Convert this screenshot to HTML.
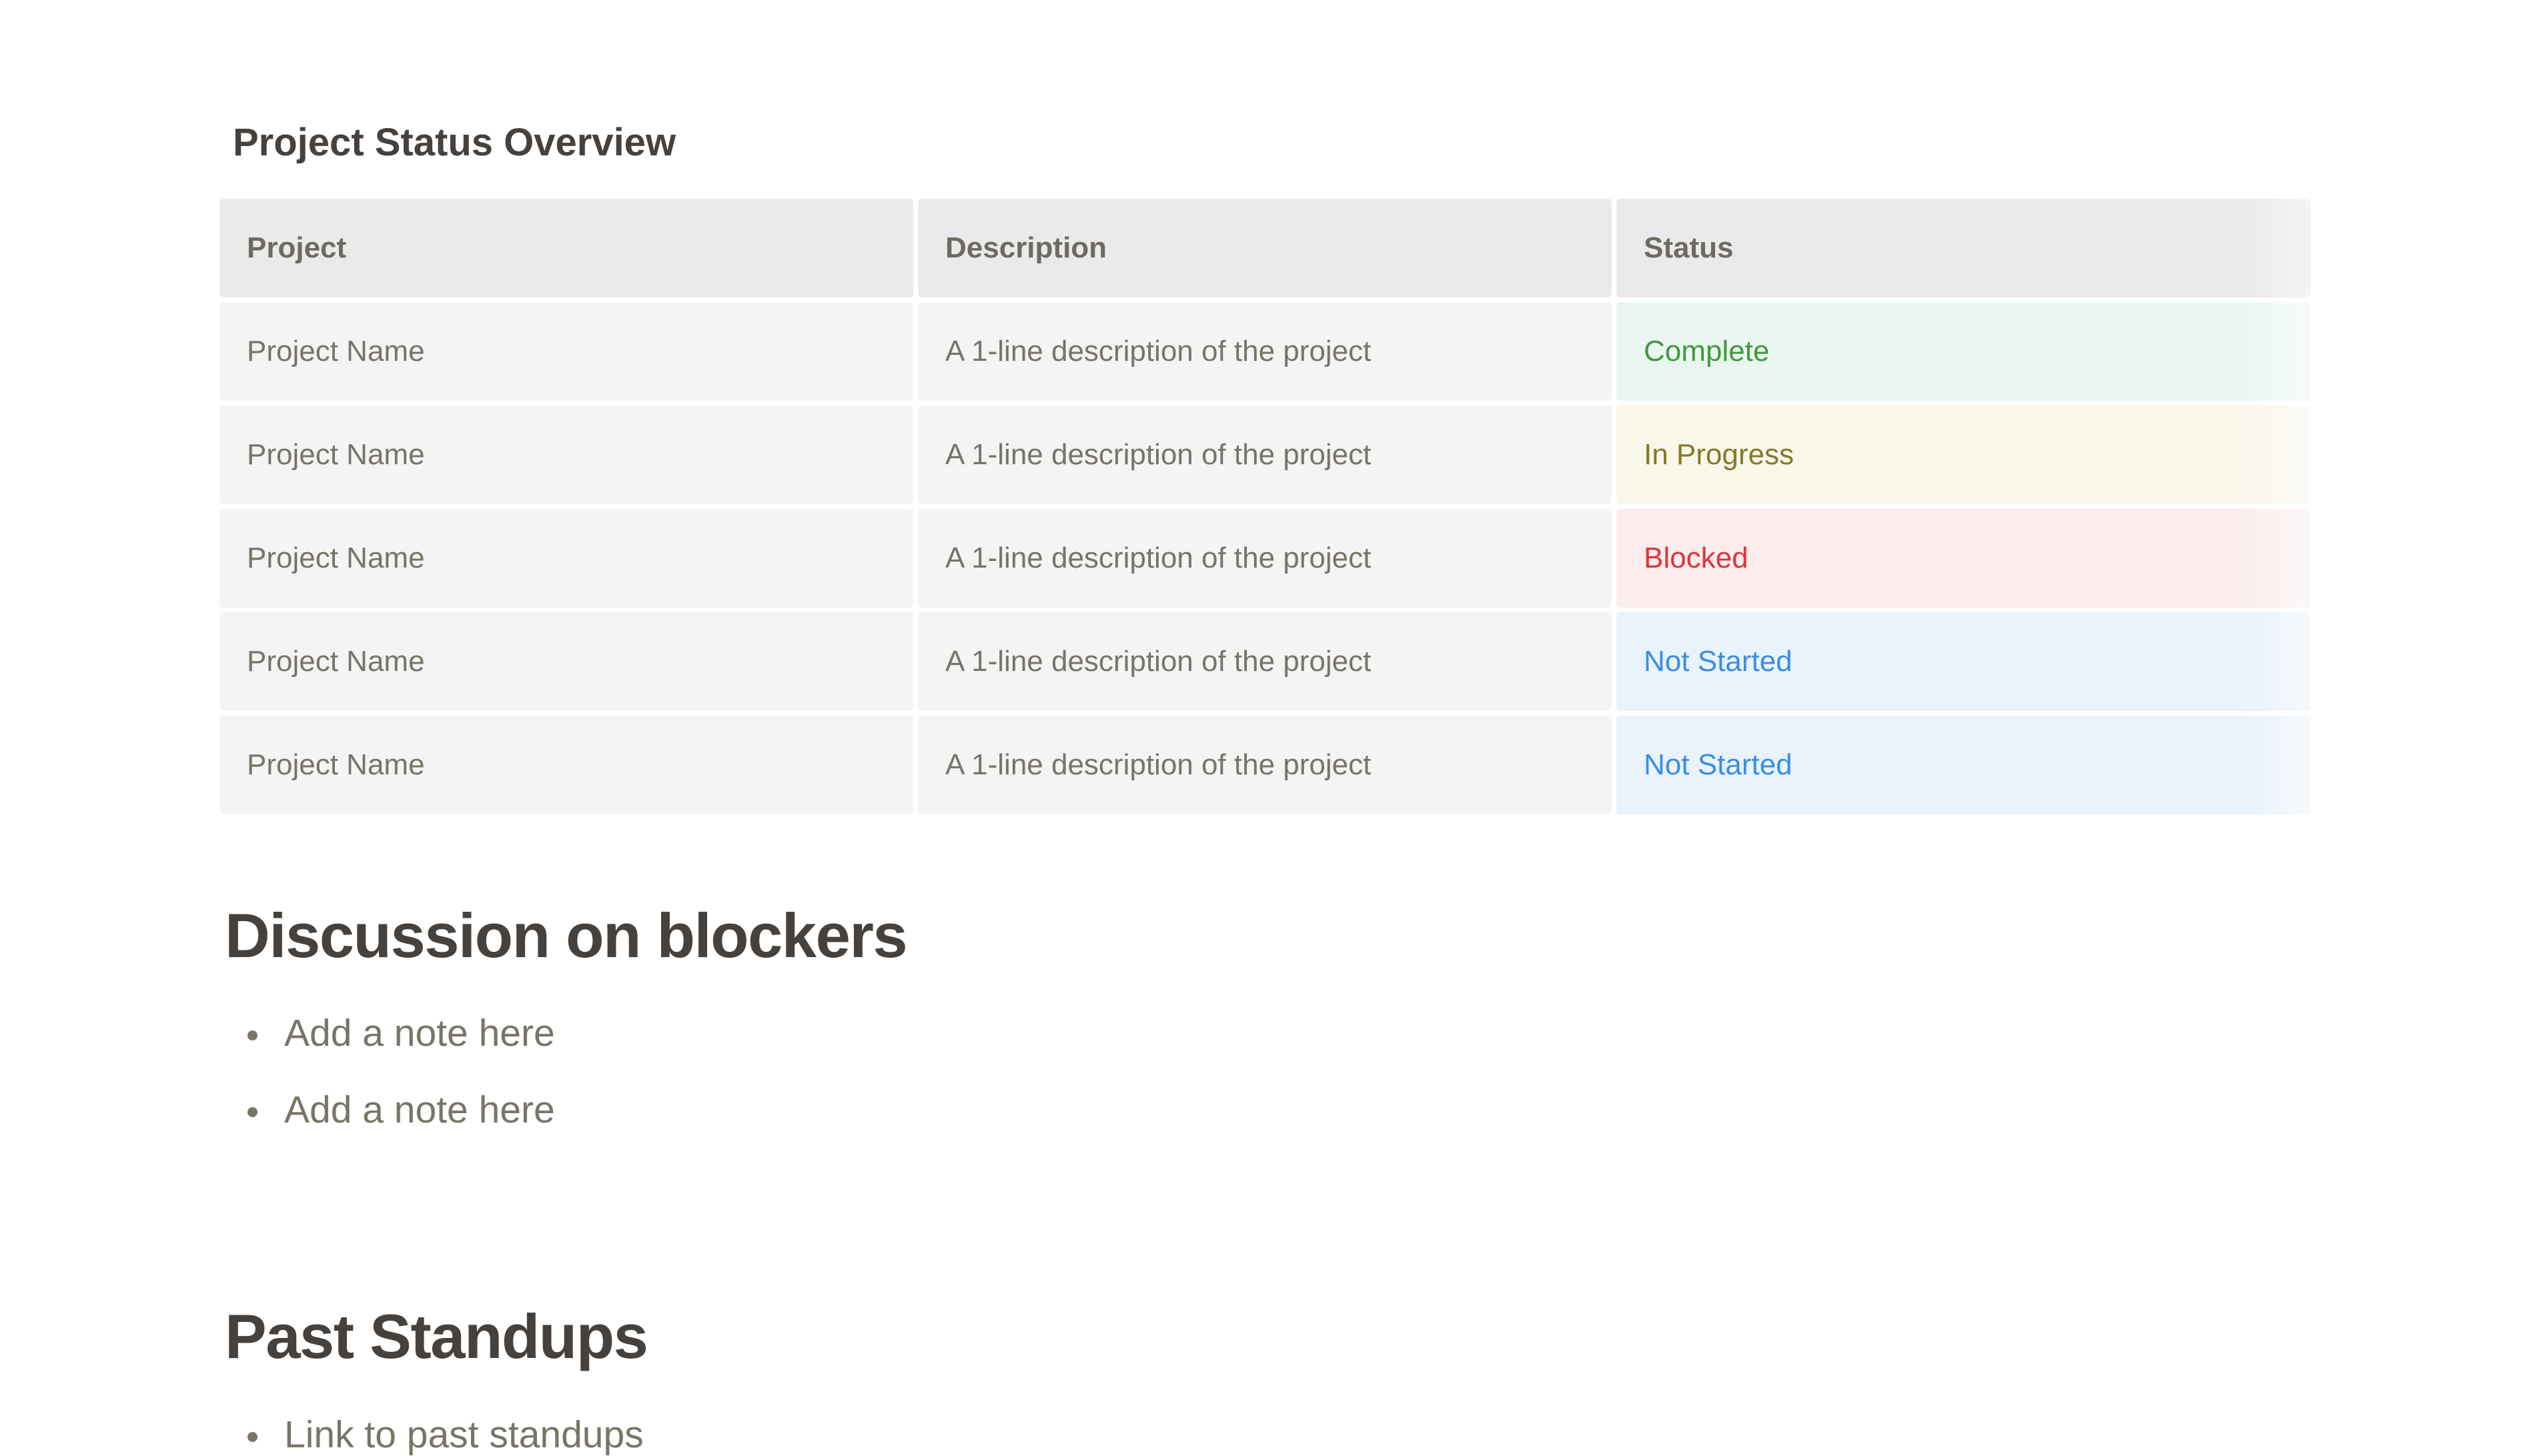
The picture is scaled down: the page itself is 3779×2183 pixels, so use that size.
<!DOCTYPE html>
<html><head><meta charset="utf-8">
<style>
html,body{margin:0;padding:0;background:#fff;}
body{width:3779px;height:2160px;position:relative;overflow:hidden;font-family:"Liberation Sans",sans-serif;}
.t{position:absolute;white-space:nowrap;line-height:1;}
.title{left:349px;top:185px;font-size:58px;font-weight:bold;color:#46413d;}
.h{font-size:94px;font-weight:bold;color:#46413d;left:337px;letter-spacing:-1.5px;}
.li{font-size:57px;color:#787468;left:426px;}
.dot{position:absolute;width:15px;height:15px;border-radius:50%;background:#787468;left:371px;}
.cell{position:absolute;height:148px;border-radius:6px;box-sizing:border-box;padding-left:41px;display:flex;align-items:center;font-size:44px;color:#787468;}
.hd{background:#eaeaea;font-weight:bold;color:#6e6a62;}
.bd{background:#f4f4f4;}
.c1{left:329px;width:1040px;}
.c2{left:1376px;width:1040px;}
.c3{left:2423px;width:1041px;}
.hd.c3{background:linear-gradient(to right,#eaeaea 90%,#f4f4f4);}
.g{background:linear-gradient(to right,#eaf7f0 90%,#f6fbf8);color:#3f9a3c;}
.y{background:linear-gradient(to right,#f9f6ea 90%,#fcfbf6);color:#857a27;}
.r{background:linear-gradient(to right,#fbeded 90%,#fdf7f7);color:#e1333c;}
.b{background:linear-gradient(to right,#e8f3fc 90%,#f5f9fd);color:#3b8de6;}
</style></head><body>
<div class="t title">Project Status Overview</div>

<div class="cell hd c1" style="top:298px">Project</div>
<div class="cell hd c2" style="top:298px">Description</div>
<div class="cell hd c3" style="top:298px">Status</div>

<div class="cell bd c1" style="top:453px">Project Name</div>
<div class="cell bd c2" style="top:453px">A 1-line description of the project</div>
<div class="cell g c3" style="top:453px">Complete</div>

<div class="cell bd c1" style="top:608px">Project Name</div>
<div class="cell bd c2" style="top:608px">A 1-line description of the project</div>
<div class="cell y c3" style="top:608px">In Progress</div>

<div class="cell bd c1" style="top:763px">Project Name</div>
<div class="cell bd c2" style="top:763px">A 1-line description of the project</div>
<div class="cell r c3" style="top:763px">Blocked</div>

<div class="cell bd c1" style="top:918px">Project Name</div>
<div class="cell bd c2" style="top:918px">A 1-line description of the project</div>
<div class="cell b c3" style="top:918px">Not Started</div>

<div class="cell bd c1" style="top:1073px">Project Name</div>
<div class="cell bd c2" style="top:1073px">A 1-line description of the project</div>
<div class="cell b c3" style="top:1073px">Not Started</div>

<div class="t h" style="top:1356px">Discussion on blockers</div>
<div class="dot" style="top:1545px"></div>
<div class="t li" style="top:1521px">Add a note here</div>
<div class="dot" style="top:1660px"></div>
<div class="t li" style="top:1636px">Add a note here</div>

<div class="t h" style="top:1957px">Past Standups</div>
<div class="dot" style="top:2147px"></div>
<div class="t li" style="top:2123px">Link to past standups</div>
</body></html>
